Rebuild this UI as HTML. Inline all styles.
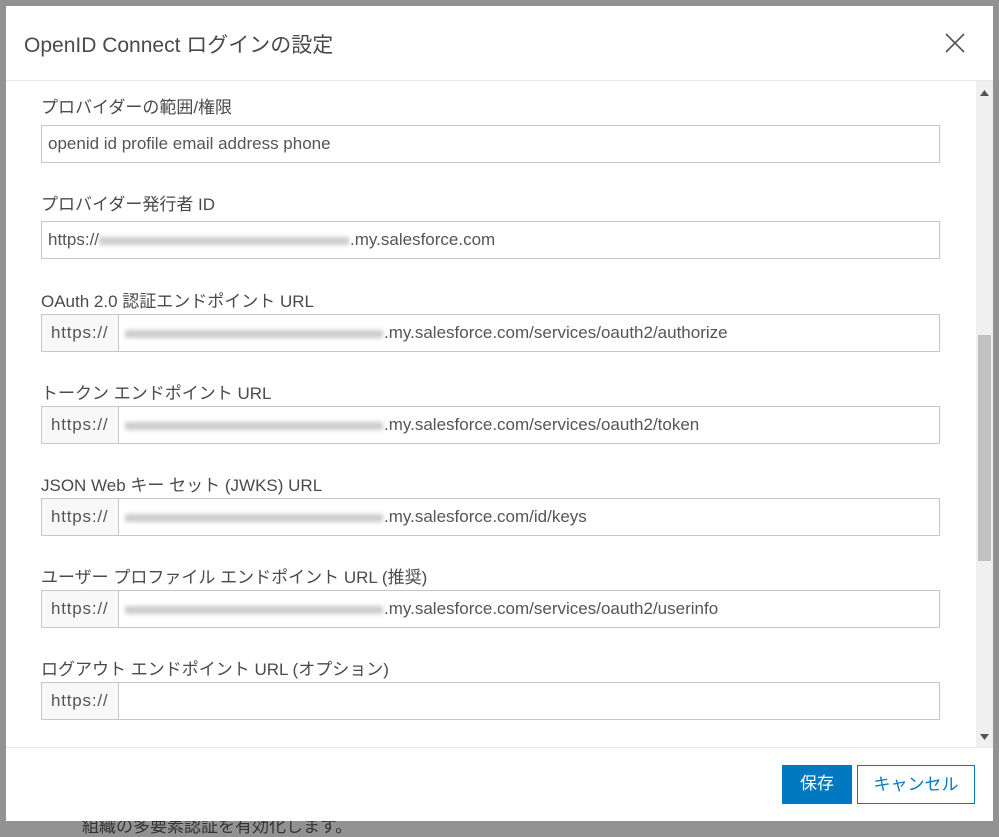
<!DOCTYPE html>
<html><head><meta charset="utf-8"><style>
*{box-sizing:border-box;margin:0;padding:0}
body{width:999px;height:829px;background:#929292;position:relative;overflow:hidden;font-family:"Liberation Sans","Noto Sans CJK JP",sans-serif;color:#4a4a4a}
.bgtext{position:absolute;left:82px;top:812px;font-size:17px;color:#333}
.dlg{position:absolute;left:6px;top:6px;width:987px;height:815px;background:#fff}
.title{position:absolute;left:18px;top:23px;font-size:21px;color:#4a4a4a}
.close{position:absolute;left:938px;top:26px}
.hl{position:absolute;left:0;width:987px;height:1px;background:#e9e9e9}
.sb{position:absolute;left:970px;top:75px;width:17px;height:666px;background:#f0f0f0}
.thumb{position:absolute;left:972px;top:329px;width:13px;height:226px;background:#c1c1c1}
.lbl{position:absolute;left:35px;font-size:17px;color:#4a4a4a}
.inp{position:absolute;left:35px;width:899px;height:38px;border:1px solid #c6c6c6;font-size:17px;color:#555;padding:8px 6px;white-space:nowrap}
.pre{position:absolute;left:35px;width:78px;height:38px;border:1px solid #c6c6c6;background:#f8f8f8;font-size:17px;letter-spacing:0.8px;color:#555;padding:8px 9px}
.inp2{position:absolute;left:112px;width:822px;height:38px;border:1px solid #c6c6c6;font-size:17px;color:#555;padding:8px 6px;white-space:nowrap}
.blur{display:inline-block;width:258px;height:8px;background:#ccc;filter:blur(2px);vertical-align:middle;margin-right:1px}
.btn{position:absolute;top:759px;height:39px;font-size:17px;text-align:center;line-height:37px}
</style></head><body>
<div class="bgtext">組織の多要素認証を有効化します。</div>
<div class="dlg">
<div class="title">OpenID Connect ログインの設定</div>
<svg class="close" width="22" height="22" viewBox="0 0 22 22"><path d="M2 2L20 20M20 2L2 20" stroke="#555" stroke-width="1.6"/></svg>
<div class="hl" style="top:74px"></div>
<div class="hl" style="top:741px"></div>
<div class="sb"></div><div class="thumb"></div>
<svg style="position:absolute;left:974px;top:84px" width="9" height="6"><path d="M0 6L4.5 0L9 6Z" fill="#555"/></svg>
<svg style="position:absolute;left:974px;top:728px" width="9" height="6"><path d="M0 0L4.5 6L9 0Z" fill="#555"/></svg>

<div class="lbl" style="top:87px">プロバイダーの範囲/権限</div>
<div class="inp" style="top:119px">openid id profile email address phone</div>

<div class="lbl" style="top:184px">プロバイダー発行者 ID</div>
<div class="inp" style="top:215px">https://<span class="blur" style="width:250px"></span>.my.salesforce.com</div>

<div class="lbl" style="top:281px">OAuth 2.0 認証エンドポイント URL</div>
<div class="pre" style="top:308px">https://</div>
<div class="inp2" style="top:308px"><span class="blur"></span>.my.salesforce.com/services/oauth2/authorize</div>

<div class="lbl" style="top:373px">トークン エンドポイント URL</div>
<div class="pre" style="top:400px">https://</div>
<div class="inp2" style="top:400px"><span class="blur"></span>.my.salesforce.com/services/oauth2/token</div>

<div class="lbl" style="top:465px">JSON Web キー セット (JWKS) URL</div>
<div class="pre" style="top:492px">https://</div>
<div class="inp2" style="top:492px"><span class="blur"></span>.my.salesforce.com/id/keys</div>

<div class="lbl" style="top:557px">ユーザー プロファイル エンドポイント URL (推奨)</div>
<div class="pre" style="top:584px">https://</div>
<div class="inp2" style="top:584px"><span class="blur"></span>.my.salesforce.com/services/oauth2/userinfo</div>

<div class="lbl" style="top:649px">ログアウト エンドポイント URL (オプション)</div>
<div class="pre" style="top:676px">https://</div>
<div class="inp2" style="top:676px"></div>

<div class="btn" style="left:776px;width:70px;background:#0079c1;color:#fff">保存</div>
<div class="btn" style="left:851px;width:118px;border:1px solid #0079c1;color:#0079c1;background:#fff">キャンセル</div>
</div>
</body></html>
